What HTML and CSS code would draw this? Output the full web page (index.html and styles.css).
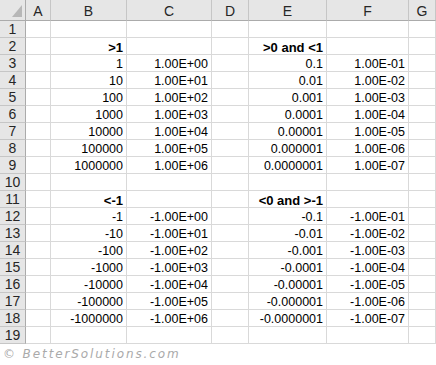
FILE: index.html
```html
<!DOCTYPE html>
<html>
<head>
<meta charset="utf-8">
<title>Scientific notation</title>
<link rel="stylesheet" href="styles.css">
</head>
<body>
<div class="sheet">
  <div class="corner"><svg class="corner-mark" width="10" height="12" viewBox="0 0 10 12"><polygon points="10,0 10,12 0,12" fill="#b7b7b7"/></svg></div>
  <div class="colhead">A</div><div class="colhead">B</div><div class="colhead">C</div><div class="colhead">D</div><div class="colhead">E</div><div class="colhead">F</div><div class="colhead">G</div>

  <div class="rowhead">1</div><div class="cell"></div><div class="cell"></div><div class="cell"></div><div class="cell"></div><div class="cell"></div><div class="cell"></div><div class="cell"></div>
  <div class="rowhead">2</div><div class="cell"></div><div class="cell bold">&gt;1</div><div class="cell"></div><div class="cell"></div><div class="cell bold">&gt;0 and &lt;1</div><div class="cell"></div><div class="cell"></div>
  <div class="rowhead">3</div><div class="cell"></div><div class="cell">1</div><div class="cell">1.00E+00</div><div class="cell"></div><div class="cell">0.1</div><div class="cell">1.00E-01</div><div class="cell"></div>
  <div class="rowhead">4</div><div class="cell"></div><div class="cell">10</div><div class="cell">1.00E+01</div><div class="cell"></div><div class="cell">0.01</div><div class="cell">1.00E-02</div><div class="cell"></div>
  <div class="rowhead">5</div><div class="cell"></div><div class="cell">100</div><div class="cell">1.00E+02</div><div class="cell"></div><div class="cell">0.001</div><div class="cell">1.00E-03</div><div class="cell"></div>
  <div class="rowhead">6</div><div class="cell"></div><div class="cell">1000</div><div class="cell">1.00E+03</div><div class="cell"></div><div class="cell">0.0001</div><div class="cell">1.00E-04</div><div class="cell"></div>
  <div class="rowhead">7</div><div class="cell"></div><div class="cell">10000</div><div class="cell">1.00E+04</div><div class="cell"></div><div class="cell">0.00001</div><div class="cell">1.00E-05</div><div class="cell"></div>
  <div class="rowhead">8</div><div class="cell"></div><div class="cell">100000</div><div class="cell">1.00E+05</div><div class="cell"></div><div class="cell">0.000001</div><div class="cell">1.00E-06</div><div class="cell"></div>
  <div class="rowhead">9</div><div class="cell"></div><div class="cell">1000000</div><div class="cell">1.00E+06</div><div class="cell"></div><div class="cell">0.0000001</div><div class="cell">1.00E-07</div><div class="cell"></div>
  <div class="rowhead">10</div><div class="cell"></div><div class="cell"></div><div class="cell"></div><div class="cell"></div><div class="cell"></div><div class="cell"></div><div class="cell"></div>
  <div class="rowhead">11</div><div class="cell"></div><div class="cell bold">&lt;-1</div><div class="cell"></div><div class="cell"></div><div class="cell bold">&lt;0 and &gt;-1</div><div class="cell"></div><div class="cell"></div>
  <div class="rowhead">12</div><div class="cell"></div><div class="cell">-1</div><div class="cell">-1.00E+00</div><div class="cell"></div><div class="cell">-0.1</div><div class="cell">-1.00E-01</div><div class="cell"></div>
  <div class="rowhead">13</div><div class="cell"></div><div class="cell">-10</div><div class="cell">-1.00E+01</div><div class="cell"></div><div class="cell">-0.01</div><div class="cell">-1.00E-02</div><div class="cell"></div>
  <div class="rowhead">14</div><div class="cell"></div><div class="cell">-100</div><div class="cell">-1.00E+02</div><div class="cell"></div><div class="cell">-0.001</div><div class="cell">-1.00E-03</div><div class="cell"></div>
  <div class="rowhead">15</div><div class="cell"></div><div class="cell">-1000</div><div class="cell">-1.00E+03</div><div class="cell"></div><div class="cell">-0.0001</div><div class="cell">-1.00E-04</div><div class="cell"></div>
  <div class="rowhead">16</div><div class="cell"></div><div class="cell">-10000</div><div class="cell">-1.00E+04</div><div class="cell"></div><div class="cell">-0.00001</div><div class="cell">-1.00E-05</div><div class="cell"></div>
  <div class="rowhead">17</div><div class="cell"></div><div class="cell">-100000</div><div class="cell">-1.00E+05</div><div class="cell"></div><div class="cell">-0.000001</div><div class="cell">-1.00E-06</div><div class="cell"></div>
  <div class="rowhead">18</div><div class="cell"></div><div class="cell">-1000000</div><div class="cell">-1.00E+06</div><div class="cell"></div><div class="cell">-0.0000001</div><div class="cell">-1.00E-07</div><div class="cell"></div>
  <div class="rowhead">19</div><div class="cell"></div><div class="cell"></div><div class="cell"></div><div class="cell"></div><div class="cell"></div><div class="cell"></div><div class="cell"></div>
</div>
<div class="credit">© BetterSolutions.com</div>
</body>
</html>
```

FILE: styles.css
```css
html, body {
  margin: 0;
  padding: 0;
  background: #ffffff;
}

body {
  width: 436px;
  height: 365px;
  overflow: hidden;
  font-family: "Liberation Sans", Arial, sans-serif;
}

.sheet {
  display: grid;
  grid-template-columns: 26px 25px 76px 85px 37px 78px 82px 27px;
  grid-template-rows: 21px repeat(19, 17px);
  font-size: 12.5px;
  color: #000000;
}

.corner,
.colhead,
.rowhead {
  background: #e6e6e6;
  color: #262626;
  box-sizing: border-box;
  border-right: 1px solid #c6c6c6;
  border-bottom: 1px solid #c6c6c6;
}

.corner {
  position: relative;
  border-bottom-color: #ababab;
  border-right-color: #ababab;
}

.corner-mark {
  position: absolute;
  left: 12px;
  top: 5px;
}

.colhead {
  display: flex;
  align-items: center;
  justify-content: center;
  font-size: 14px;
  line-height: 14px;
  padding-top: 1px;
  border-bottom-color: #ababab;
}

.rowhead {
  display: flex;
  align-items: flex-end;
  justify-content: center;
  font-size: 14px;
  line-height: 14px;
  padding-bottom: 1px;
  border-right-color: #ababab;
}

.cell {
  box-sizing: border-box;
  border-right: 1px solid #d9d9d9;
  border-bottom: 1px solid #d9d9d9;
  display: flex;
  align-items: flex-end;
  justify-content: flex-end;
  padding-right: 3px;
  line-height: 13px;
  white-space: nowrap;
}

.bold {
  font-weight: bold;
  font-size: 13px;
}

.credit {
  padding: 3px 0 0 3px;
  font-family: "DejaVu Sans", sans-serif;
  font-style: italic;
  font-size: 12px;
  letter-spacing: 1.9px;
  color: #aaaaaa;
}
```
